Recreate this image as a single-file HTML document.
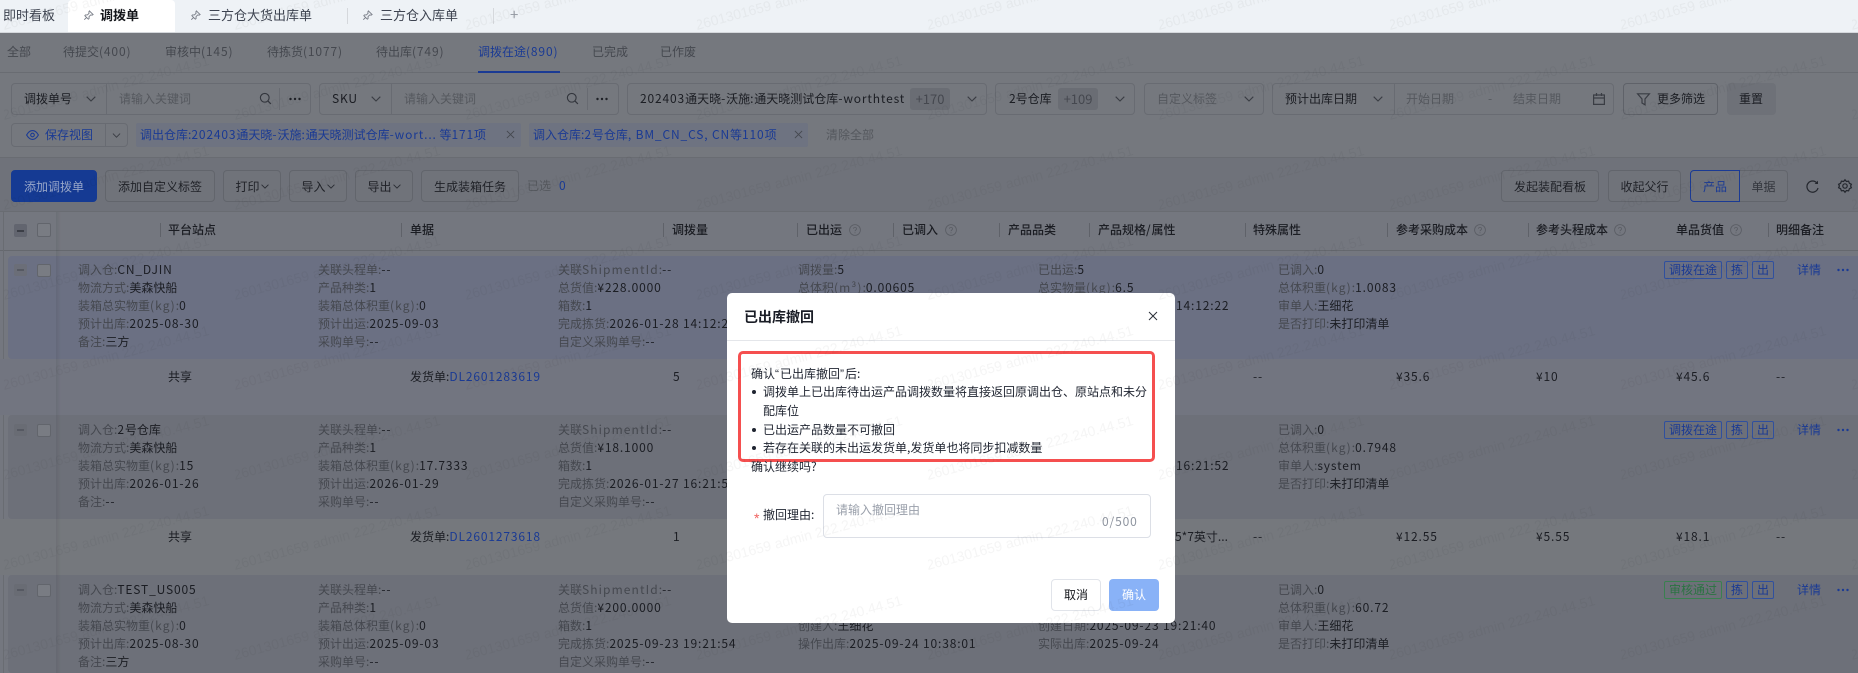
<!DOCTYPE html>
<html lang="zh-CN">
<head>
<meta charset="utf-8">
<title>调拨单</title>
<style>
*{box-sizing:border-box;margin:0;padding:0}
html,body{width:1858px;height:673px;overflow:hidden;background:#75787e}
body{position:relative;font-family:"Noto Sans CJK SC","Liberation Sans",sans-serif;font-size:12px;color:#1b1d23}
.a{position:absolute}
.t{position:absolute;white-space:nowrap;line-height:18px;height:18px}
.g{color:#45484f}
.p{color:#55585e}
.bl{color:#1a3a94}
.f{position:absolute;top:83px;height:32px;border:1px solid #686b72;border-radius:4px}
.v{position:absolute;top:0;bottom:0;width:1px;background:#686b72}
.b{position:absolute;top:170px;height:32px;border:1px solid #62656c;border-radius:4px;display:flex;align-items:center;justify-content:center;color:#1f2127;white-space:nowrap;background:#70737a}
.bd{position:absolute;top:88px;height:22px;background:#6a6d74;border-radius:3px;color:#45484f;font-size:13px;line-height:22px;text-align:center}
.tag{position:absolute;top:123px;height:24px;background:#6e7381;border-radius:2px}
.th{position:absolute;top:221px;line-height:18px;font-weight:500;white-space:nowrap;color:#1b1d23}
.dv{position:absolute;top:223px;height:14px;width:1px;background:#5f6269}
.col{position:absolute;line-height:18px;white-space:nowrap}
.col div{height:18px}
i{font-style:normal;color:#45484f}
em{font-style:normal;letter-spacing:.85px}
em.k{letter-spacing:1.1px}
.card{position:absolute;left:8px;width:1850px;height:104px;border-radius:4px 0 0 4px;background:#6d7079}
.st{position:absolute;height:18px;line-height:16px;border:1px solid #30509e;border-radius:2px;color:#1a3a94;text-align:center}
.chk{position:absolute;left:37px;width:14px;height:14px;border:1px solid #62656c;border-radius:2px;background:#797c83}
.min{position:absolute;left:14px;width:13px;height:13px;border-radius:2px;background:#64676f}
.min:after{content:"";position:absolute;left:3px;top:6px;width:7px;height:1.5px;background:#3b3e46}
.min.r:after{background:#565962;top:5px}
svg{position:absolute;overflow:visible}
.s{fill:none;stroke:#3a3d44;stroke-width:1.2}
.q{font-family:"Liberation Sans",sans-serif;letter-spacing:1px}
#m{position:absolute;left:727px;top:293px;width:448px;height:330px;background:#fff;border-radius:5px;color:#1f2430}
</style>
</head>
<body>
<svg width="0" height="0" style="position:absolute">
<defs>
<symbol id="chev" viewBox="0 0 10 6"><path d="M.7.7 5 5 9.3.7" fill="none" stroke="currentColor" stroke-width="1.1"/></symbol>
<symbol id="pin" viewBox="0 0 12 12"><path d="M7 1l4 4-1 .6-1.6-.2L6.6 7.200 6.600 9.400 5.800 10 2 6.200l.6-.8H4.800L6.600 3.600 6.400 2zM3.800 8.200 1.400 10.600" fill="none" stroke="currentColor" stroke-width="1"/></symbol>
<symbol id="srch" viewBox="0 0 14 14"><circle cx="6.200" cy="6.200" r="4.700" fill="none" stroke="currentColor" stroke-width="1.200"/><path d="M9.600 9.600 12.800 12.800" stroke="currentColor" stroke-width="1.300"/></symbol>
<symbol id="dots" viewBox="0 0 14 4"><circle cx="2.500" cy="2" r="1.200" fill="currentColor"/><circle cx="7" cy="2" r="1.200" fill="currentColor"/><circle cx="11.500" cy="2" r="1.200" fill="currentColor"/></symbol>
<symbol id="q" viewBox="0 0 12 12"><circle cx="6" cy="6" r="5.400" fill="none" stroke="currentColor" stroke-width=".8"/><path d="M4.500 4.700a1.500 1.500 0 1 1 2.300 1.300c-.6.400-.8.700-.8 1.300M6 8.300v1" fill="none" stroke="currentColor" stroke-width=".8"/></symbol>
<symbol id="x" viewBox="0 0 10 10"><path d="M1 1l8 8M9 1l-8 8" stroke="currentColor" stroke-width="1"/></symbol>
</defs>
</svg>

<!-- tab bar -->
<div class="a" style="left:0;top:0;width:1858px;height:32px;background:#eef2f6;color:#3d4350;font-size:13px"></div>
<div class="a" style="left:68px;top:0;width:107px;height:32px;background:#fff;border-radius:4px 4px 0 0"></div>
<div class="a" style="left:0;top:31.500px;width:1858px;height:1px;background:#d5d8dc"></div>
<div class="t" style="left:3px;top:6px;font-size:13px;color:#3d4350">即时看板</div>
<svg style="left:83px;top:10px;color:#777c86" width="11" height="11"><use href="#pin"/></svg>
<div class="t" style="left:100px;top:6px;font-size:13px;font-weight:700;color:#14161b">调拨单</div>
<svg style="left:190px;top:10px;color:#777c86" width="11" height="11"><use href="#pin"/></svg>
<div class="t" style="left:208px;top:6px;font-size:13px;color:#3d4350">三方仓大货出库单</div>
<div class="a" style="left:347px;top:8px;width:1px;height:16px;background:#d5d8dc"></div>
<svg style="left:362px;top:10px;color:#777c86" width="11" height="11"><use href="#pin"/></svg>
<div class="t" style="left:380px;top:6px;font-size:13px;color:#3d4350">三方仓入库单</div>
<div class="a" style="left:493px;top:8px;width:1px;height:16px;background:#d5d8dc"></div>
<div class="t" style="left:510px;top:6px;font-size:15px;color:#9a9fa8">+</div>

<!-- status nav -->
<div class="a" style="left:0;top:72px;width:1858px;height:1px;background:#696c72"></div>
<div class="t g" style="left:7px;top:43px">全部</div>
<div class="t g" style="left:63px;top:43px">待提交<em>(400)</em></div>
<div class="t g" style="left:165px;top:43px">审核中<em>(145)</em></div>
<div class="t g" style="left:267px;top:43px">待拣货<em>(1077)</em></div>
<div class="t g" style="left:376px;top:43px">待出库<em>(749)</em></div>
<div class="t bl" style="left:478px;top:43px">调拨在途<em>(890)</em></div>
<div class="a" style="left:478px;top:71px;width:82px;height:2px;background:#1a3a94"></div>
<div class="t g" style="left:592px;top:43px">已完成</div>
<div class="t g" style="left:660px;top:43px">已作废</div>

<!-- filters -->
<div class="f" style="left:11px;width:300px"></div>
<div class="v" style="left:106px;top:83px;height:32px;bottom:auto"></div>
<div class="t" style="left:24px;top:90px">调拨单号</div>
<svg style="left:86px;top:96px;color:#3a3d44" width="10" height="6"><use href="#chev"/></svg>
<div class="t p" style="left:119px;top:90px">请输入关键词</div>
<svg style="left:259px;top:92px;color:#33363d" width="13" height="13"><use href="#srch"/></svg>
<div class="a" style="left:279px;top:88px;width:1px;height:22px;background:#686b72"></div>
<svg style="left:288px;top:97px;color:#1f2127" width="14" height="4"><use href="#dots"/></svg>

<div class="f" style="left:319px;width:300px"></div>
<div class="v" style="left:391px;top:83px;height:32px;bottom:auto"></div>
<div class="t" style="left:332px;top:90px"><em>SKU</em></div>
<svg style="left:371px;top:96px;color:#3a3d44" width="10" height="6"><use href="#chev"/></svg>
<div class="t p" style="left:404px;top:90px">请输入关键词</div>
<svg style="left:566px;top:92px;color:#33363d" width="13" height="13"><use href="#srch"/></svg>
<div class="a" style="left:587px;top:88px;width:1px;height:22px;background:#686b72"></div>
<svg style="left:595px;top:97px;color:#1f2127" width="14" height="4"><use href="#dots"/></svg>

<div class="f" style="left:627px;width:360px"></div>
<div class="t" style="left:640px;top:90px"><em>202403</em>通天晓<em>-</em>沃施<em>:</em>通天晓测试仓库<em>-worthtest</em></div>
<div class="bd" style="left:910px;width:40px">+170</div>
<svg style="left:967px;top:96px;color:#3a3d44" width="10" height="6"><use href="#chev"/></svg>

<div class="f" style="left:995px;width:140px"></div>
<div class="t" style="left:1009px;top:90px">2号仓库</div>
<div class="bd" style="left:1058px;width:40px">+109</div>
<svg style="left:1115px;top:96px;color:#3a3d44" width="10" height="6"><use href="#chev"/></svg>

<div class="f" style="left:1144px;width:120px"></div>
<div class="t p" style="left:1157px;top:90px">自定义标签</div>
<svg style="left:1244px;top:96px;color:#3a3d44" width="10" height="6"><use href="#chev"/></svg>

<div class="f" style="left:1272px;width:342px"></div>
<div class="v" style="left:1394px;top:83px;height:32px;bottom:auto"></div>
<div class="t" style="left:1285px;top:90px">预计出库日期</div>
<svg style="left:1373px;top:96px;color:#3a3d44" width="10" height="6"><use href="#chev"/></svg>
<div class="t p" style="left:1406px;top:90px">开始日期</div>
<div class="t p" style="left:1488px;top:90px">-</div>
<div class="t p" style="left:1513px;top:90px">结束日期</div>
<svg style="left:1593px;top:93px" width="12" height="12"><path class="s" d="M.6 2h10.800v9.400H.6zM.6 5h10.800M3.500 0v3M8.500 0v3"/></svg>

<div class="f" style="left:1623px;width:95px;border-color:#5f6269"></div>
<svg style="left:1637px;top:93px" width="13" height="13"><path class="s" d="M.6.8h11.800L8 6v5.800L5 10V6z"/></svg>
<div class="t" style="left:1657px;top:90px">更多筛选</div>
<div class="a" style="left:1727px;top:83px;width:49px;height:32px;background:#6e7178;border-radius:4px"></div>
<div class="t" style="left:1739px;top:90px">重置</div>

<!-- chip row -->
<div class="a" style="left:11px;top:123px;width:117px;height:24px;border:1px solid #686b72;border-radius:4px"></div>
<div class="a" style="left:105px;top:123px;width:1px;height:24px;background:#686b72"></div>
<svg style="left:26px;top:130px" width="13" height="10"><path d="M.6 5C2.500 1.800 4.500.6 6.500.6S10.500 1.800 12.400 5C10.500 8.200 8.500 9.400 6.500 9.400S2.500 8.200.6 5z" fill="none" stroke="#1a3a94" stroke-width="1.100"/><circle cx="6.500" cy="5" r="1.800" fill="none" stroke="#1a3a94" stroke-width="1.100"/></svg>
<div class="t bl" style="left:45px;top:126px">保存视图</div>
<svg style="left:112px;top:133px;color:#3a3d44" width="9" height="5"><use href="#chev"/></svg>

<div class="tag" style="left:136px;width:385px"></div>
<div class="t bl" style="left:140px;top:126px">调出仓库:<em>202403</em>通天晓<em>-</em>沃施<em>:</em>通天晓测试仓库<em>-wort...</em> 等<em>171</em>项</div>
<svg style="left:506px;top:130px;color:#45484f" width="9" height="9"><use href="#x"/></svg>
<div class="tag" style="left:529px;width:279px"></div>
<div class="t bl" style="left:533px;top:126px">调入仓库:<em>2</em>号仓库<em>, BM_CN_CS, CN</em>等<em>110</em>项</div>
<svg style="left:794px;top:130px;color:#45484f" width="9" height="9"><use href="#x"/></svg>
<div class="t p" style="left:826px;top:126px">清除全部</div>
<div class="a" style="left:0;top:157px;width:1858px;height:1px;background:#696c72"></div>

<!-- toolbar -->
<div class="a" style="left:0;top:158px;width:1858px;height:53px;background:#6f727a"></div>
<div class="b" style="left:11px;width:86px;background:#153a93;border-color:#153a93;color:#97a6c9">添加调拨单</div>
<div class="b" style="left:105px;width:110px">添加自定义标签</div>
<div class="b" style="left:223px;width:58px">打印<svg style="position:static;margin-left:1px;color:#2a2d34" width="8" height="5"><use href="#chev"/></svg></div>
<div class="b" style="left:289px;width:58px">导入<svg style="position:static;margin-left:1px;color:#2a2d34" width="8" height="5"><use href="#chev"/></svg></div>
<div class="b" style="left:355px;width:58px">导出<svg style="position:static;margin-left:1px;color:#2a2d34" width="8" height="5"><use href="#chev"/></svg></div>
<div class="b" style="left:421px;width:98px">生成装箱任务</div>
<div class="t p" style="left:527px;top:177px">已选</div>
<div class="t bl" style="left:559px;top:177px">0</div>
<div class="b" style="left:1501px;width:98px">发起装配看板</div>
<div class="b" style="left:1608px;width:73px">收起父行</div>
<div class="b" style="left:1739px;width:49px;border-radius:0 4px 4px 0;color:#33363d">单据</div>
<div class="b" style="left:1690px;width:50px;border-color:#1a3a94;color:#1a3a94;border-radius:4px 0 0 4px">产品</div>
<svg style="left:1806px;top:180px" width="13" height="13"><path d="M11 3.200A5.600 5.600 0 1 0 12 8" fill="none" stroke="#24272e" stroke-width="1.200"/><path d="M12 .6v3.400H8.600" fill="#24272e" stroke="none"/></svg>
<svg style="left:1838px;top:179px" width="14" height="14"><path class="s" style="stroke:#24272e" d="M7 .7l1.400 1.800 2.200-.3.800 2.100 2 1-.8 1.700.8 1.700-2 1-.8 2.100-2.200-.3L7 13.300l-1.400-1.800-2.200.3-.8-2.100-2-1 .8-1.700-.8-1.700 2-1 .8-2.100 2.200.3z"/><circle class="s" style="stroke:#24272e" cx="7" cy="7" r="2.200"/></svg>

<!-- table base -->
<div class="a" style="left:0;top:211px;width:1858px;height:462px;background:#74777f"></div>
<div class="a" style="left:0;top:250px;width:1858px;height:1px;background:#65686e"></div>
<div class="a" style="left:0;top:211px;width:1858px;height:1px;background:#696c72"></div>
<div class="a" style="left:3px;top:211px;width:1px;height:462px;background:#696c72"></div>

<div class="card" style="top:256px;height:103px;background:#6b7083"></div>
<div class="a" style="left:0;top:359px;width:1858px;height:56px;background:#727580"></div>
<div class="card" style="top:415px"></div>
<div class="a" style="left:0;top:519px;width:1858px;height:56px;background:#75787d"></div>
<div class="card" style="top:575px;height:98px"></div>

<!-- table header -->
<div class="min" style="top:224px;background:#62656f"></div><div class="chk" style="top:223px"></div>
<div class="dv" style="left:160px"></div><div class="th" style="left:168px">平台站点</div>
<div class="dv" style="left:401px"></div><div class="th" style="left:410px">单据</div>
<div class="dv" style="left:663px"></div><div class="th" style="left:672px">调拨量</div>
<div class="dv" style="left:797px"></div><div class="th" style="left:806px">已出运</div>
<svg style="left:849px;top:224px;color:#595c63" width="12" height="12"><use href="#q"/></svg>
<div class="dv" style="left:893px"></div><div class="th" style="left:902px">已调入</div>
<svg style="left:945px;top:224px;color:#595c63" width="12" height="12"><use href="#q"/></svg>
<div class="dv" style="left:999px"></div><div class="th" style="left:1008px">产品品类</div>
<div class="dv" style="left:1089px"></div><div class="th" style="left:1098px">产品规格<em>/</em>属性</div>
<div class="dv" style="left:1245px"></div><div class="th" style="left:1253px">特殊属性</div>
<div class="dv" style="left:1387px"></div><div class="th" style="left:1396px">参考采购成本</div>
<svg style="left:1474px;top:224px;color:#595c63" width="12" height="12"><use href="#q"/></svg>
<div class="dv" style="left:1528px"></div><div class="th" style="left:1536px">参考头程成本</div>
<svg style="left:1614px;top:224px;color:#595c63" width="12" height="12"><use href="#q"/></svg>
<div class="th" style="left:1676px">单品货值</div>
<svg style="left:1730px;top:224px;color:#595c63" width="12" height="12"><use href="#q"/></svg>
<div class="dv" style="left:1768px"></div><div class="th" style="left:1776px">明细备注</div>

<!-- row 1 -->
<div class="min r" style="top:264px;height:12px;background:#6b6e78"></div><div class="chk" style="top:264px;height:13px"></div>
<div class="col" style="left:78px;top:261px"><div><i>调入仓:</i><em>CN_DJIN</em></div><div><i>物流方式:</i>美森快船</div><div><i>装箱总实物重<em class="k">(kg)</em>:</i><em>0</em></div><div><i>预计出库:</i><em>2025-08-30</em></div><div><i>备注:</i>三方</div></div>
<div class="col" style="left:318px;top:261px"><div><i>关联头程单:</i><em>--</em></div><div><i>产品种类:</i><em>1</em></div><div><i>装箱总体积重<em class="k">(kg)</em>:</i><em>0</em></div><div><i>预计出运:</i><em>2025-09-03</em></div><div><i>采购单号:</i><em>--</em></div></div>
<div class="col" style="left:558px;top:261px"><div><i>关联<em class="k">ShipmentId</em>:</i><em>--</em></div><div><i>总货值:</i><em>¥228.0000</em></div><div><i>箱数:</i><em>1</em></div><div><i>完成拣货:</i><em>2026-01-28 14:12:22</em></div><div><i>自定义采购单号:</i><em>--</em></div></div>
<div class="col" style="left:798px;top:261px"><div><i>调拨量:</i><em>5</em></div><div><i>总体积<em class="k">(m³)</em>:</i><em>0.00605</em></div></div>
<div class="col" style="left:1038px;top:261px"><div><i>已出运:</i><em>5</em></div><div><i>总实物量<em class="k">(kg)</em>:</i><em>6.5</em></div></div>
<div class="t" style="left:1176px;top:297px"><em>14:12:22</em></div>
<div class="col" style="left:1278px;top:261px"><div><i>已调入:</i><em>0</em></div><div><i>总体积重<em class="k">(kg)</em>:</i><em>1.0083</em></div><div><i>审单人:</i>王细花</div><div><i>是否打印:</i>未打印清单</div></div>
<div class="st" style="left:1664px;top:261px;width:58px">调拨在途</div><div class="st" style="left:1726px;top:261px;width:22px">拣</div><div class="st" style="left:1752px;top:261px;width:22px">出</div>
<div class="t bl" style="left:1797px;top:261px">详情</div>
<svg style="left:1836px;top:268px;color:#1a3a94" width="14" height="4"><use href="#dots"/></svg>

<div class="t" style="left:168px;top:368px">共享</div>
<div class="t" style="left:410px;top:368px">发货单:<span class="bl"><em>DL2601283619</em></span></div>
<div class="t" style="left:673px;top:368px">5</div>
<div class="t" style="left:1253px;top:368px"><em>--</em></div>
<div class="t" style="left:1396px;top:368px"><em>¥35.6</em></div>
<div class="t" style="left:1536px;top:368px"><em>¥10</em></div>
<div class="t" style="left:1676px;top:368px"><em>¥45.6</em></div>
<div class="t" style="left:1776px;top:368px"><em>--</em></div>

<!-- row 2 -->
<div class="min r" style="top:424px;height:12px;background:#696c74"></div><div class="chk" style="top:424px;height:13px"></div>
<div class="col" style="left:78px;top:421px"><div><i>调入仓:</i><em>2</em>号仓库</div><div><i>物流方式:</i>美森快船</div><div><i>装箱总实物重<em class="k">(kg)</em>:</i><em>15</em></div><div><i>预计出库:</i><em>2026-01-26</em></div><div><i>备注:</i><em>--</em></div></div>
<div class="col" style="left:318px;top:421px"><div><i>关联头程单:</i><em>--</em></div><div><i>产品种类:</i><em>1</em></div><div><i>装箱总体积重<em class="k">(kg)</em>:</i><em>17.7333</em></div><div><i>预计出运:</i><em>2026-01-29</em></div><div><i>采购单号:</i><em>--</em></div></div>
<div class="col" style="left:558px;top:421px"><div><i>关联<em class="k">ShipmentId</em>:</i><em>--</em></div><div><i>总货值:</i><em>¥18.1000</em></div><div><i>箱数:</i><em>1</em></div><div><i>完成拣货:</i><em>2026-01-27 16:21:52</em></div><div><i>自定义采购单号:</i><em>--</em></div></div>
<div class="t" style="left:1176px;top:457px"><em>16:21:52</em></div>
<div class="col" style="left:1278px;top:421px"><div><i>已调入:</i><em>0</em></div><div><i>总体积重<em class="k">(kg)</em>:</i><em>0.7948</em></div><div><i>审单人:</i><em>system</em></div><div><i>是否打印:</i>未打印清单</div></div>
<div class="st" style="left:1664px;top:421px;width:58px">调拨在途</div><div class="st" style="left:1726px;top:421px;width:22px">拣</div><div class="st" style="left:1752px;top:421px;width:22px">出</div>
<div class="t bl" style="left:1797px;top:421px">详情</div>
<svg style="left:1836px;top:428px;color:#1a3a94" width="14" height="4"><use href="#dots"/></svg>

<div class="t" style="left:168px;top:528px">共享</div>
<div class="t" style="left:410px;top:528px">发货单:<span class="bl"><em>DL2601273618</em></span></div>
<div class="t" style="left:673px;top:528px">1</div>
<div class="t" style="left:1175px;top:528px">5*7英寸...</div>
<div class="t" style="left:1253px;top:528px"><em>--</em></div>
<div class="t" style="left:1396px;top:528px"><em>¥12.55</em></div>
<div class="t" style="left:1536px;top:528px"><em>¥5.55</em></div>
<div class="t" style="left:1676px;top:528px"><em>¥18.1</em></div>
<div class="t" style="left:1776px;top:528px"><em>--</em></div>

<!-- row 3 -->
<div class="min r" style="top:584px;height:12px;background:#696c74"></div><div class="chk" style="top:584px;height:13px"></div>
<div class="col" style="left:78px;top:581px"><div><i>调入仓:</i><em>TEST_US005</em></div><div><i>物流方式:</i>美森快船</div><div><i>装箱总实物重<em class="k">(kg)</em>:</i><em>0</em></div><div><i>预计出库:</i><em>2025-08-30</em></div><div><i>备注:</i>三方</div></div>
<div class="col" style="left:318px;top:581px"><div><i>关联头程单:</i><em>--</em></div><div><i>产品种类:</i><em>1</em></div><div><i>装箱总体积重<em class="k">(kg)</em>:</i><em>0</em></div><div><i>预计出运:</i><em>2025-09-03</em></div><div><i>采购单号:</i><em>--</em></div></div>
<div class="col" style="left:558px;top:581px"><div><i>关联<em class="k">ShipmentId</em>:</i><em>--</em></div><div><i>总货值:</i><em>¥200.0000</em></div><div><i>箱数:</i><em>1</em></div><div><i>完成拣货:</i><em>2025-09-23 19:21:54</em></div><div><i>自定义采购单号:</i><em>--</em></div></div>
<div class="col" style="left:798px;top:617px"><div><i>创建人:</i>王细花</div><div><i>操作出库:</i><em>2025-09-24 10:38:01</em></div></div>
<div class="col" style="left:1038px;top:617px"><div><i>创建日期:</i><em>2025-09-23 19:21:40</em></div><div><i>实际出库:</i><em>2025-09-24</em></div></div>
<div class="col" style="left:1278px;top:581px"><div><i>已调入:</i><em>0</em></div><div><i>总体积重<em class="k">(kg)</em>:</i><em>60.72</em></div><div><i>审单人:</i>王细花</div><div><i>是否打印:</i>未打印清单</div></div>
<div class="st" style="left:1664px;top:581px;width:58px;border-color:#3a8050;color:#2b7342">审核通过</div><div class="st" style="left:1726px;top:581px;width:22px">拣</div><div class="st" style="left:1752px;top:581px;width:22px">出</div>
<div class="t bl" style="left:1797px;top:581px">详情</div>
<svg style="left:1836px;top:588px;color:#1a3a94" width="14" height="4"><use href="#dots"/></svg>

<!-- fixed column shadow -->
<div class="a" style="left:56px;top:212px;width:5px;height:461px;background:linear-gradient(90deg,rgba(0,0,0,.07),rgba(0,0,0,0))"></div>

<!-- modal -->
<div id="m">
  <div class="t" style="left:17px;top:15px;font-size:14px;font-weight:700;color:#1a1d26">已出库撤回</div>
  <svg style="left:421px;top:18px;color:#2b2f38" width="10" height="10"><use href="#x"/></svg>
  <div class="a" style="left:0;top:47px;width:448px;height:1px;background:#e4e6ea"></div>
  <div class="t" style="left:24px;top:72px">确认<span class="q">“</span>已出库撤回<span class="q">”</span>后:</div>
  <div class="a" style="left:25px;top:97px;width:4px;height:4px;border-radius:50%;background:#1f2430"></div>
  <div class="t" style="left:36px;top:90px">调拨单上已出库待出运产品调拨数量将直接返回原调出仓、原站点和未分</div>
  <div class="t" style="left:36px;top:109px">配库位</div>
  <div class="a" style="left:25px;top:135px;width:4px;height:4px;border-radius:50%;background:#1f2430"></div>
  <div class="t" style="left:36px;top:128px">已出运产品数量不可撤回</div>
  <div class="a" style="left:25px;top:153px;width:4px;height:4px;border-radius:50%;background:#1f2430"></div>
  <div class="t" style="left:36px;top:146px">若存在关联的未出运发货单,发货单也将同步扣减数量</div>
  <div class="a" style="left:11px;top:58px;width:417px;height:111px;border:3px solid #f54f4f;border-radius:5px"></div>
  <div class="t" style="left:24px;top:165px">确认继续吗?</div>
  <div class="t" style="left:27px;top:216px;font-size:14px;color:#f0625f;font-family:'Liberation Sans',sans-serif">*</div>
  <div class="t" style="left:36px;top:213px">撤回理由:</div>
  <div class="a" style="left:96px;top:201px;width:328px;height:44px;border:1px solid #dcdfe6;border-radius:4px"></div>
  <div class="t" style="left:109px;top:208px;color:#9aa0ab">请输入撤回理由</div>
  <div class="t" style="left:375px;top:220px;color:#8e949f"><em>0/500</em></div>
  <div class="a" style="left:324px;top:286px;width:50px;height:32px;border:1px solid #e1e4ea;border-radius:4px;text-align:center;line-height:30px;color:#14161b">取消</div>
  <div class="a" style="left:382px;top:286px;width:50px;height:32px;background:#89b2f7;border-radius:4px;text-align:center;line-height:32px;color:#fff">确认</div>
</div>

<!-- watermark -->
<svg class="a" style="left:0;top:0;pointer-events:none" width="1858" height="673">
<defs>
<pattern id="wm" x="4" y="-40" width="231" height="90" patternUnits="userSpaceOnUse">
<text x="0" y="70" transform="rotate(-15 0 70)" font-size="14" fill="#000" fill-opacity=".04" font-family="Liberation Sans, sans-serif">2601301659 admin 222.240.44.51</text>
</pattern>
</defs>
<rect width="1858" height="673" fill="url(#wm)"/>
</svg>
</body>
</html>
